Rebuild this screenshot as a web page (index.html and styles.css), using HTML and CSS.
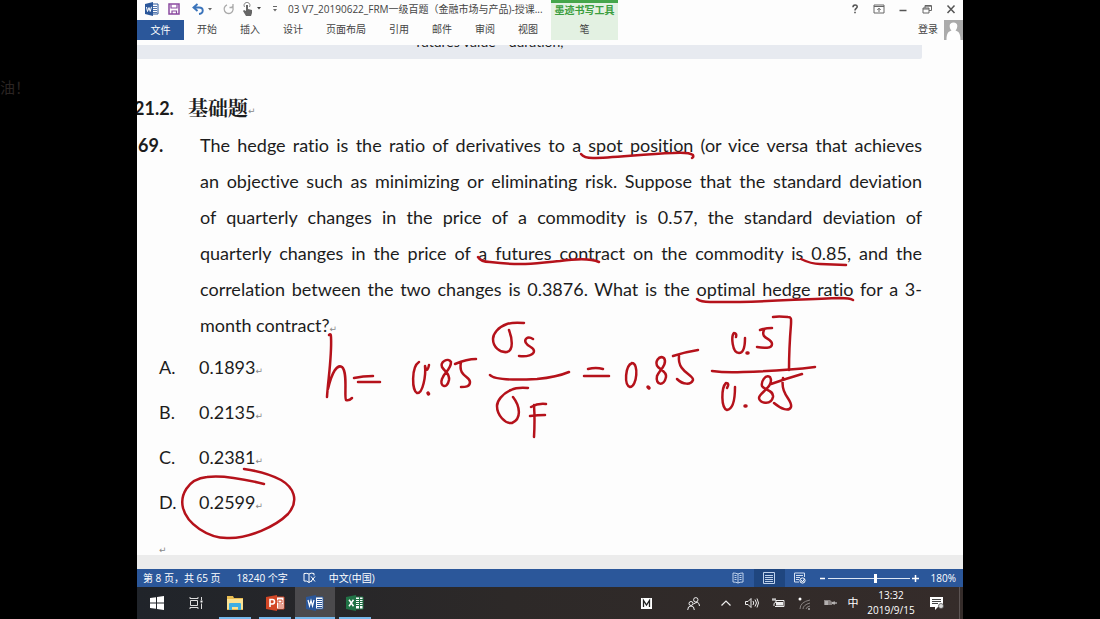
FILE: index.html
```html
<!DOCTYPE html>
<html lang="zh-CN">
<head>
<meta charset="utf-8">
<title>03 V7_20190622_FRM一级百题</title>
<link rel="stylesheet" href="styles.css">
</head>
<body>
<aside class="side">油！</aside>
<div class="app">
  <header class="ribbon">
    <div class="ribbon-main">
      <div class="quick">
        <svg class="q-word" width="14" height="14" viewBox="0 0 14 14"><path d="M7 2h6v10H7z" fill="#fff" stroke="#2b579a"/><path d="M8 4.500h4M8 6.500h4M8 8.500h4M8 10.500h4" stroke="#2b579a" stroke-width=".8"/><path d="M0 2l8-2v14l-8-2z" fill="#2b579a"/><path d="M1.500 5l1 4.500L4 5.500l1.200 4L6.500 4.800" fill="none" stroke="#fff"/></svg>
        <button class="q-save" aria-label="保存"><svg width="12" height="12" viewBox="0 0 12 12"><path d="M1 1h10v10H1z" fill="#fff" stroke="#8a4aa0" stroke-width="1.500"/><path d="M3 1.500V5h6V1.500M4 11V8h4.500v3" fill="none" stroke="#8a4aa0" stroke-width="1.200"/></svg></button>
        <button class="q-undo" aria-label="撤消"><svg width="22" height="12" viewBox="0 0 22 12"><path d="M5.500 1L1.500 4.500l4 3.500M2 4.500h5c5 0 5 6 0 6.500" fill="none" stroke="#3b74bb" stroke-width="1.900"/><path d="M16 5h4l-2 2.500z" fill="#666"/></svg></button>
        <button class="q-redo" aria-label="重复"><svg width="12" height="12" viewBox="0 0 12 12"><path d="M4 1.800a4.500 4.500 0 1 0 5 1.200M6.500 4.500h3.500V1" fill="none" stroke="#aaa" stroke-width="1.300"/></svg></button>
        <button class="q-touch" aria-label="触摸模式"><svg width="22" height="14" viewBox="0 0 22 14"><path d="M2.500 5a3 3 0 1 1 5 0" fill="none" stroke="#888"/><path d="M4 3h2v4l4 1v3l-1 3H4L1 9l1-1 2 1z" fill="#666"/><path d="M15 5h4l-2 2.500z" fill="#444"/></svg></button>
        <button class="q-more" aria-label="自定义"><svg width="8" height="8" viewBox="0 0 8 8"><path d="M2 1.500h4" stroke="#666"/><path d="M2 4h4L4 6.500z" fill="#666"/></svg></button>
        <span class="title">03 V7_20190622_FRM一级百题（金融市场与产品)-授课...</span>
      </div>
      <nav class="tabs">
        <button class="file">文件</button><button>开始</button><button>插入</button><button>设计</button><button>页面布局</button><button>引用</button><button>邮件</button><button>审阅</button><button>视图</button>
      </nav>
    </div>
    <div class="context"><span class="context-title">墨迹书写工具</span><button>笔</button></div>
    <div class="ribbon-end">
      <div class="window-buttons">
        <button aria-label="帮助"><svg width="12" height="12" viewBox="0 0 12 12"><path d="M4 4.200c0-3 4.200-2.900 4.200-.4C8.200 5.400 6 5.500 6 7.500M6 8.800v1.500" fill="none" stroke="#555" stroke-width="1.600"/></svg></button>
        <button aria-label="功能区显示选项"><svg width="12" height="12" viewBox="0 0 12 12"><path d="M1 2h10v8H1zM1 3.500h10M6 9V5.500M4.300 7L6 5.200 7.700 7" fill="none" stroke="#666"/></svg></button>
        <button aria-label="最小化"><svg width="12" height="12" viewBox="0 0 12 12"><path d="M2.500 7.500h7" stroke="#555" stroke-width="1.500"/></svg></button>
        <button aria-label="还原"><svg width="12" height="12" viewBox="0 0 12 12"><path d="M2 5h6v5H2zM4 5V2.500h6.500v5H8M2 6h6M4 3.200h6" fill="none" stroke="#666"/></svg></button>
        <button aria-label="关闭"><svg width="12" height="12" viewBox="0 0 12 12"><path d="M2.500 2.500l7 7.500M9.500 2.500l-7 7.500" stroke="#555" stroke-width="1.500"/></svg></button>
      </div>
      <div class="account"><a href="#">登录</a><svg width="19" height="20" viewBox="0 0 19 20"><path d="M0 0h19v20H0z" fill="#ababab"/><path d="M9.500 2.500c5 0 4.500 5.500 2 8 3 1 5 2.500 5 9.500h-14c0-7 2-8.500 5-9.500-2.500-2.500-3-8 2-8z" fill="#fff"/></svg></div>
    </div>
  </header>

  <main class="doc">
    <div class="formula"><span>futures value * duration,</span></div>
    <h1 class="heading"><span class="number">21.2.</span><span class="name">基础题</span><i class="mark">↵</i></h1>
    <section class="question">
      <b>69.</b>
      <p>
        <span>The hedge ratio is the ratio of derivatives to a spot position (or vice versa that achieves</span>
        <span>an objective such as minimizing or eliminating risk. Suppose that the standard deviation</span>
        <span>of quarterly changes in the price of a commodity is 0.57, the standard deviation of</span>
        <span>quarterly changes in the price of a futures contract on the commodity is 0.85, and the</span>
        <span>correlation between the two changes is 0.3876. What is the optimal hedge ratio for a 3-</span>
        <span class="last">month contract?<i class="mark">↵</i></span>
      </p>
    </section>
    <dl class="options">
      <dt>A.</dt><dd>0.1893<i class="mark">↵</i></dd>
      <dt>B.</dt><dd>0.2135<i class="mark">↵</i></dd>
      <dt>C.</dt><dd>0.2381<i class="mark">↵</i></dd>
      <dt>D.</dt><dd>0.2599<i class="mark">↵</i></dd>
    </dl>
    <div class="tail"><i class="mark">↵</i></div>
    <svg class="ink" width="826" height="510" viewBox="137 45 826 510">
      <g class="underline">
        <path d="M581 154q3 4 12 4c20 0 50-4 80-5q16-1 20 2q1 2-1 3"/>
        <path d="M478 257q3 5 12 5c32 4 50 1 70-1q28-4 39 1"/>
        <path d="M801 259q10 5 19 5l26 1"/>
        <path d="M697 299q4 3 13 3c40 1 90-3 130-4q10 0 13 2"/>
        <path d="M264 484C240 478 222 475 207 477C187 479 180 496 183 508C187 524 208 538 227 538C249 539 276 526 288 514C300 500 293 487 281 480Q266 472 244 469"/>
      </g>
      <g class="hand">
        <path d="M329 335q2-2 2 2c1 20-3 43-4 60M328 389c4-17 9-25 14-22c6 5 2 30 4 33q3 1 6-2"/>
        <path d="M354 378q9-2 19-2M358 382l22 0"/>
        <path d="M419 362c-8 5-7 29-2 31c6 1 9-18 8-27q2 8 4-1"/>
        <path d="M428 393l.5 1" class="dot"/>
        <path d="M451 362c-3-5-11 0-9 5c3 5 8 6 7 13c-2 10-10 6-7-1c2-7 9-9 9-17M455 364q12-5 21-5M461 362c-3 15 9 14 9 20c0 5-5 5-9 5"/>
        <path d="M524 323q-11-1-17 1c-9 3-14 10-14 15c0 8 7 14 14 13c7-2 5-14 2-22M533 339c-6-4-9 1-7 4c2 4 8 4 8 8c0 4-7 6-15 5"/>
        <path d="M490 375c4 5 28 5 47 4q20-2 32-7"/>
        <path d="M528 388q-11-1-17 2c-9 4-14 11-14 16c0 9 8 18 15 17c10-4 8-17 1-26M534 405q1 15 0 32M531 407q7-4 15-3M530 416q8-1 15-1"/>
        <path d="M588 369q8-2 15 0M584 376h25"/>
        <path d="M632 363c-7 3-8 22-2 24c7 0 9-24 2-24"/>
        <path d="M648 387l1 1M747 353l1 0M745 406l1 0" class="dot"/>
        <path d="M664 358c-5-3-10 4-6 9c3 3 9 5 8 10c-2 10-11 8-9-1c2-5 11-12 7-18M673 356q12-4 25-6M679 356c-2 16 15 19 14 24c-2 5-10 5-16-1"/>
        <path d="M736 337q1-4-2-4c-3 3-2 20 5 20c5 0 6-8 6-15M760 330q6-2 12-2M764 330c-4 9 8 8 8 14c0 5-8 4-15 3"/>
        <path d="M773 317q5-1 15 0c4 0 3 3 3 7q-2 25-2 46"/>
        <path d="M712 371q14 2 31 1q40-1 72-5"/>
        <path d="M727 388q3-5-1-5c-5 5-5 25 1 27c7-1 8-14 8-23"/>
        <path d="M770 377c-5-3-9 5-8 9c2 4 12 4 11 11c-2 9-14 6-14 1c0-5 16-12 11-21M771 384q14-5 31-10M783 378c-3 17 10 22 8 29c-2 5-10 2-17-4"/>
      </g>
    </svg>
  </main>
  <div class="gutter"></div>

  <footer class="status">
    <span class="page">第 8 页，共 65 页</span><span class="words">18240 个字</span>
    <svg class="proof" width="13" height="12" viewBox="0 0 13 12"><path d="M6 10.500V2Q4 1 1 1.500V9q3-.5 5 1.500Q8 9 9 9M6 2q2-1.500 5-.5v2M8 4.500l4 5M12 4.500l-4 5" fill="none" stroke="#fff"/></svg>
    <span>中文(中国)</span>
    <div class="views">
      <button aria-label="阅读视图"><svg width="12" height="12" viewBox="0 0 12 12"><path d="M6 11V2Q4 1 1 1v9q3 0 5 1Q8 10 11 10V1Q8 1 6 2M2.500 3.500h2M2.500 5.500h2M2.500 7.500h2M7.500 3.500h2M7.500 5.500h2M7.500 7.500h2" fill="none" stroke="#bfd2ec"/></svg></button>
      <button class="on" aria-label="页面视图"><svg width="12" height="12" viewBox="0 0 12 12"><path d="M.5.500h11v11H.5zM2 3.500h8M2 5.500h8M2 7.500h8M2 9.500h8" fill="none" stroke="#bfd2ec"/></svg></button>
      <button aria-label="Web 视图"><svg width="12" height="12" viewBox="0 0 12 12"><path d="M10.500 5V1H.5v9H5M2 3.500h7M2 5.500h4M2 7.500h3" fill="none" stroke="#d4e0f2"/><circle cx="8.500" cy="8.500" r="2.600" fill="#2b579a" stroke="#fff"/><path d="M7 8l1.500 2 2-3" stroke="#fff" fill="none"/></svg></button>
    </div>
    <div class="zoom"><button aria-label="缩小"><svg width="7" height="7" viewBox="0 0 7 7"><path d="M1 3.500h5" stroke="#fff" stroke-width="1.500"/></svg></button><input type="range" min="0" max="100" value="59" aria-label="缩放"><button aria-label="放大"><svg width="7" height="7" viewBox="0 0 7 7"><path d="M0 3.500h7M3.500 0v7" stroke="#fff" stroke-width="1.500"/></svg></button></div>
    <span class="percent">180%</span>
  </footer>

  <footer class="taskbar">
    <div class="apps">
      <button aria-label="开始"><svg width="14" height="14" viewBox="0 0 14 14"><path d="M0 2l6-.8v5.300H0zM7 1l7-1v6.500H7zM0 7.500h6v5.300L0 12zM7 7.500h7V14l-7-1z" fill="#fff"/></svg></button>
      <button aria-label="任务视图"><svg width="14" height="14" viewBox="0 0 14 14"><path d="M1 1v1.500h8V1M1.500 4.500h7v5h-7zM1 13v-1.500h8V13M12.500 1v3M12.500 7.500V13" fill="none" stroke="#ddd"/><path d="M11.500 4.500h2v2h-2z" fill="#fff"/></svg></button>
      <button class="open" aria-label="资源管理器"><svg width="18" height="16" viewBox="0 0 18 16"><path d="M1 1h6l1 2h9v12H1z" fill="#e8bd52"/><path d="M1 4h16v10H1z" fill="#fbe293"/><path d="M3 15V9q0-1 1-1h10q1 0 1 1v6h-3v-3H6v3z" fill="#3daee4"/></svg></button>
      <button class="open" aria-label="PowerPoint"><svg width="19" height="16" viewBox="0 0 19 16"><path d="M10 2h8v12h-8z" fill="#fff" stroke="#d24726"/><path d="M12 5h4v3h-4zM12 10h5M12 12h5" fill="none" stroke="#d24726"/><path d="M0 2l11-2v16L0 14z" fill="#d24726"/><path d="M4 12V4.500h2.500q2 0 2 2.200T6.500 9H4" fill="none" stroke="#fff" stroke-width="1.600"/></svg></button>
      <button class="open active" aria-label="Word"><svg width="18" height="16" viewBox="0 0 18 16"><path d="M9 2h8v12H9z" fill="#fff" stroke="#2b579a"/><path d="M11 4.500h5M11 6.500h5M11 8.500h5M11 10.500h5M11 12.500h5" stroke="#2b579a"/><path d="M0 2l10-2v16L0 14z" fill="#2b579a"/><path d="M2 5l1.500 6L5 5.500 6.500 11 8 5" fill="none" stroke="#fff" stroke-width="1.200"/></svg></button>
      <button class="open" aria-label="Excel"><svg width="18" height="16" viewBox="0 0 18 16"><path d="M9 2h8v12H9z" fill="#fff" stroke="#217346"/><path d="M10 4.500h7M10 6.500h7M10 8.500h7M10 10.500h7M13.500 2v12" stroke="#217346"/><path d="M0 2l10-2v16L0 14z" fill="#217346"/><path d="M3 4.800l4.500 6.500M7.500 4.800L3 11.300" stroke="#fff" stroke-width="1.500"/></svg></button>
    </div>
    <div class="tray">
      <button class="ime" aria-label="M"><svg width="11" height="11" viewBox="0 0 11 11"><path d="M0 0h11v11H0z" fill="#fff"/><path d="M2.500 9V2.500l3 4.500 3-4.500V9" fill="none" stroke="#222" stroke-width="1.300"/></svg></button>
      <button class="people" aria-label="人脉"><svg width="13" height="13" viewBox="0 0 13 13"><g fill="none" stroke="#eee"><circle cx="4" cy="6.500" r="2"/><path d="M.7 13q0-4 3.300-4t3.300 4"/><circle cx="8.800" cy="2.800" r="2.200"/><path d="M6.500 7q5.500-4 6 2"/></g></svg></button>
      <button aria-label="显示隐藏的图标"><svg width="12" height="12" viewBox="0 0 12 12"><path d="M1.500 8.500L6 4l4.500 4.500" fill="none" stroke="#eee" stroke-width="1.200"/></svg></button>
      <button aria-label="音量"><svg width="14" height="12" viewBox="0 0 14 12"><path d="M.5 4.500H3L6 1.500v9L3 7.500H.5zM8 4q1.500 2 0 4M10 2.500q3 3.500 0 7M12 1.500q3 4.500 0 9" fill="none" stroke="#eee"/></svg></button>
      <button aria-label="电池"><svg width="14" height="12" viewBox="0 0 14 12"><path d="M5 3.500h8v6H4M2 1v2M4 1v2M1 3h4v2L3 6.500V9" fill="none" stroke="#eee"/><path d="M5 5h7v3.500H5z" fill="#eee"/></svg></button>
      <button aria-label="网络"><svg width="13" height="13" viewBox="0 0 13 13"><path d="M2 12Q2 5 12 3M5 12q0-4 7-6M8 12q0-2 4-3" fill="none" stroke="#8a8483"/><circle cx="2" cy="2" r="1.500" fill="#fff"/><circle cx="11" cy="12" r="1" fill="#aaa"/></svg></button>
      <button aria-label="设备"><svg width="14" height="12" viewBox="0 0 14 12"><path d="M1 3h6l2 2v3H1zM9 5l3-1v4L9 7" fill="#8a8483"/><path d="M2 5h3M2 7h3M9 6h5" stroke="#ddd"/></svg></button>
      <button class="lang">中</button>
      <button class="clock"><span>13:32</span><span>2019/9/15</span></button>
      <button class="notice" aria-label="通知"><svg width="14" height="14" viewBox="0 0 14 14"><path d="M0 1h13v10H8l-3 3v-3H0z" fill="#fff"/><path d="M2 3.500h9M2 5.500h9M2 7.500h6" stroke="#444"/><circle cx="11" cy="10" r="2.500" fill="#ddd" stroke="#444" stroke-width=".7"/></svg></button>
    </div>
  </footer>
</div>
</body>
</html>
```
FILE: styles.css
```css
* { box-sizing: border-box; }
body {
  margin: 0;
  min-height: 100vh;
  background: #000;
  display: grid;
  grid-template-columns: 137px minmax(0, 1fr) 137px;
  font-family: "Open Sans", "Noto Sans CJK SC", sans-serif;
  font-size: 10px;
}
button {
  border: 0;
  padding: 0;
  margin: 0;
  background: none;
  font: inherit;
  line-height: 14px;
  color: inherit;
  display: flex;
  align-items: center;
  justify-content: center;
}
svg { display: block; flex: none; }
.side {
  color: #2b2523;
  font-size: 15px;
  line-height: 20px;
  padding-top: 77px;
}
.app {
  display: flex;
  flex-direction: column;
  background: #fdfdfd;
  overflow: hidden;
}

/* Ribbon */
.ribbon {
  display: grid;
  grid-template-columns: 414px 67px 1fr;
  height: 45px;
  color: #444;
}
.quick {
  display: flex;
  align-items: center;
  height: 18px;
  padding-left: 8px;
}
.q-save { margin-left: 9px; }
.q-undo { margin-left: 12px; }
.q-redo { margin-left: 9px; }
.q-touch { margin-left: 7px; }
.q-more { margin: 0 9px 0 7px; }
.title { font-size: 10px; line-height: 14px; white-space: nowrap; }
.tabs {
  display: flex;
  gap: 23px;
  height: 20px;
  margin-top: 2px;
  padding-bottom: 2px;
  white-space: nowrap;
}
.tabs .file {
  width: 47px;
  height: 20px;
  margin-right: -10px;
  background: #2b579a;
  color: #fff;
}
.context {
  display: flex;
  flex-direction: column;
  height: 40px;
  background: #e3f1e2;
  border-top: 3px solid #45a64b;
  text-align: center;
}
.context-title {
  line-height: 14px;
  color: #3b9e3f;
  font-weight: bold;
  white-space: nowrap;
}
.context button { flex: 1; }
.window-buttons {
  display: flex;
  justify-content: flex-end;
  align-items: center;
  gap: 12px;
  height: 18px;
  padding-right: 6px;
}
.account {
  display: flex;
  justify-content: flex-end;
  align-items: center;
  gap: 6px;
  height: 20px;
  margin-top: 2px;
}
.account a {
  color: #444;
  line-height: 14px;
  padding-bottom: 2px;
  text-decoration: none;
}

/* Document */
.doc {
  position: relative;
  flex: 1;
  overflow: hidden;
  padding-right: 41px;
  color: #1c1c1c;
  font-family: Lato, "Noto Sans CJK SC", sans-serif;
  font-size: 18px;
  font-variant-ligatures: none;
  line-height: 36px;
}
.formula {
  height: 14px;
  overflow: hidden;
  background: #e7eaf0;
  border-radius: 0 0 2px 0;
  padding-left: 279px;
}
.formula span {
  display: block;
  margin-top: -10px;
  font-size: 14px;
  line-height: 14px;
}
.heading {
  display: flex;
  margin: 31px 0 0;
  font-size: 18px;
  line-height: 36px;
}
.heading .number { width: 54px; margin-left: -3px; }
.heading .name {
  font-family: "Noto Serif CJK SC", "Noto Sans CJK SC", serif;
  font-size: 20px;
}
.mark {
  font-family: "DejaVu Sans", sans-serif;
  font-size: 9px;
  font-style: normal;
  font-weight: normal;
  line-height: 9px;
  color: #888;
}
.heading .mark { align-self: center; padding-top: 6px; }
.question {
  display: grid;
  grid-template-columns: 63px minmax(0, 1fr);
  margin-top: 1px;
}
.question b { padding-left: 1px; }
.question p { margin: 0; }
.question p span {
  display: block;
  white-space: nowrap;
  text-align: justify;
  text-align-last: justify;
}
.question p .last { text-align-last: left; }
.options {
  display: grid;
  grid-template-columns: 40px 1fr;
  margin: 2px 0 0 22px;
  line-height: 45px;
}
.options dd { margin: 0; }
.tail { padding: 13px 0 0 22px; line-height: 16px; }
.ink {
  position: absolute;
  top: 0;
  left: 0;
  fill: none;
  stroke: #b5121b;
  stroke-linecap: round;
  stroke-linejoin: round;
  pointer-events: none;
}
.underline { stroke-width: 2.500; }
.hand { stroke-width: 2.500; }
.dot { stroke-width: 3.500; }
.gutter { height: 14px; background: #ececec; }

/* Status bar */
.status {
  display: flex;
  align-items: center;
  height: 18px;
  padding: 0 7px 0 6px;
  background: #2b579a;
  color: #fff;
  line-height: 14px;
  white-space: nowrap;
}
.words { margin-left: 16px; }
.proof { margin: 0 13px 0 15px; }
.views { display: flex; align-self: stretch; margin-left: auto; }
.views button { width: 31px; }
.views .on { background: #1f467f; }
.zoom { display: flex; align-items: center; gap: 2px; margin-left: 3px; }
.zoom input {
  appearance: none;
  width: 82px;
  height: 12px;
  margin: 0;
  background: linear-gradient(#dce6f4, #dce6f4) center / 100% 1px no-repeat;
}
.zoom input::-webkit-slider-thumb {
  appearance: none;
  width: 3px;
  height: 9px;
  background: #fff;
}
.percent { margin-left: 12px; }

/* Taskbar */
.taskbar {
  display: flex;
  justify-content: space-between;
  height: 32px;
  background: linear-gradient(90deg, #20242a, #2d2928 45%, #352c2a);
  color: #fff;
}
.apps, .tray { display: flex; }
.apps button { width: 39px; }
.apps .open {
  width: 40px;
  background: linear-gradient(#76b9ed, #76b9ed) center bottom / 32px 2px no-repeat;
}
.apps .active {
  background: linear-gradient(#76b9ed, #76b9ed) center bottom / 100% 2px no-repeat #4b4a4d;
}
.tray button { width: 26px; }
.tray .ime { margin-right: 20px; }
.tray .people { width: 28px; margin-right: 6px; }
.tray .lang { width: 20px; font-size: 11px; }
.tray .clock {
  width: 56px;
  flex-direction: column;
  line-height: 15px;
}
.tray .notice {
  width: 41px;
  margin-right: 3px;
  border-right: 1px solid #5c5453;
  padding-right: 5px;
}
```
